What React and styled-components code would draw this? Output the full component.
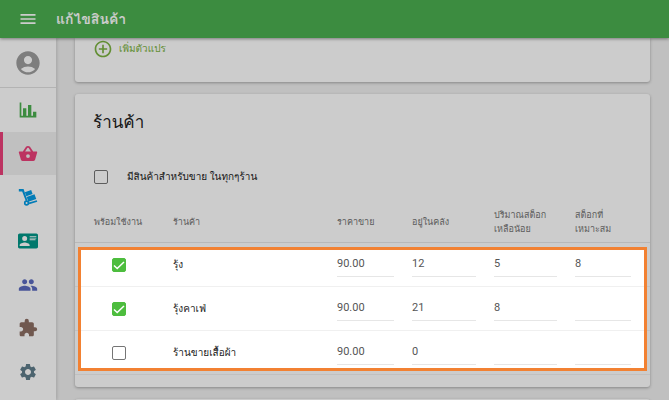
import React, { useState } from "react";
import styled, { createGlobalStyle } from "styled-components";
import {
  MdMenu,
  MdAccountCircle,
  MdPeople,
  MdExtension,
  MdSettings,
  MdAddCircleOutline,
} from "react-icons/md";

const GlobalStyle = createGlobalStyle`
  *, *::before, *::after { box-sizing: border-box; }
  html, body, #root { height: 100%; }
  body {
    margin: 0;
    overflow: hidden;
    background: #f0f0f0;
    color: #212121;
    font-family: Roboto, Tahoma, Loma, "Noto Sans Thai Looped", Waree, sans-serif;
    font-size: 10px;
    line-height: 16px;
  }
  button, input { font: inherit; color: inherit; }
`;

const Page = styled.div`
  height: 100%;
  display: flex;
  flex-direction: column;
  overflow: hidden;
`;

const TopBar = styled.header`
  position: relative;
  z-index: 2;
  flex: none;
  display: flex;
  align-items: center;
  gap: 18px;
  height: 38px;
  padding: 0 18px;
  background: #4caf50;
  color: #fff;
  box-shadow: 0 1px 3px rgba(0, 0, 0, 0.4);
`;

const MenuButton = styled.button`
  display: flex;
  padding: 0;
  border: 0;
  background: none;
  cursor: pointer;
  svg { width: 20px; height: 20px; }
`;

const PageTitle = styled.h1`
  margin: 0;
  font-size: 14px;
  line-height: 24px;
  font-weight: 700;
`;

const Body = styled.div`
  flex: 1;
  min-height: 0;
  display: flex;
`;

const Sidebar = styled.aside`
  flex: none;
  width: 56px;
  background: #fff;
  box-shadow: 1px 0 3px rgba(0, 0, 0, 0.15);
`;

const Account = styled.a`
  display: flex;
  align-items: center;
  justify-content: center;
  height: 50px;
  border-bottom: 1px solid #e0e0e0;
  color: #9e9e9e;
  svg { width: 28px; height: 28px; }
`;

const Nav = styled.nav`
  display: grid;
  grid-auto-rows: 1fr;
  height: 306px;
`;

const NavItem = styled.a`
  display: flex;
  align-items: center;
  justify-content: center;
  color: ${(p) => p.$color};
  background: ${(p) => (p.$active ? "#f0f0f0" : "transparent")};
  box-shadow: ${(p) => (p.$active ? "inset 3px 0 0 #ec407a" : "none")};
  svg { width: 20px; height: 20px; }
`;

const Main = styled.main`
  flex: 1;
  min-width: 0;
  display: flex;
  flex-direction: column;
  gap: 12px;
  padding: 0 19px;
`;

const Card = styled.section`
  flex: none;
  background: #fff;
  border-radius: ${(p) => (p.$continued ? "0 0 3px 3px" : "3px")};
  padding: ${(p) => (p.$continued ? "2px 18px 24px" : "16px 0 12px")};
  box-shadow: 0 1px 3px rgba(0, 0, 0, 0.3);
`;

const AddButton = styled.button`
  display: flex;
  align-items: center;
  gap: 6px;
  padding: 0;
  height: 18px;
  border: 0;
  background: none;
  color: #7cb342;
  cursor: pointer;
  svg { width: 20px; height: 20px; }
`;

const CardTitle = styled.h2`
  margin: 0;
  padding: 0 18px;
  font-size: 17px;
  line-height: 24px;
  font-weight: 400;
`;

const AllStores = styled.label`
  display: flex;
  align-items: center;
  gap: 19px;
  margin-top: 31px;
  padding: 0 19px;
  height: 24px;
`;

const CheckBox = styled.span`
  display: inline-grid;
  width: 14px;
  height: 14px;
  vertical-align: middle;
  input, svg { grid-area: 1 / 1; }
  input {
    appearance: none;
    width: 14px;
    height: 14px;
    margin: 0;
    border: 1px solid #757575;
    border-radius: 2px;
    background: #fff;
  }
  input:checked { border-color: #4dbd3e; background: #4dbd3e; }
  svg { width: 14px; height: 14px; pointer-events: none; visibility: hidden; }
  input:checked + svg { visibility: visible; }
`;

const TableArea = styled.div`
  position: relative;
  margin-top: 10px;
`;

const StoreTable = styled.table`
  width: 100%;
  table-layout: fixed;
  border-collapse: separate;
  border-spacing: 0;
`;

const HeadCell = styled.th`
  width: ${(p) => p.$width || "auto"};
  height: 44px;
  padding: 2px 9px 0;
  border-bottom: 1px solid #e6e6e6;
  color: #757575;
  font-size: 9px;
  line-height: 14px;
  font-weight: 400;
  text-align: left;
  &:first-child { padding-left: 19px; padding-right: 0; }
  &:last-child { padding-right: 19px; }
`;

const Cell = styled.td`
  height: 44px;
  padding: 0 9px;
  border-bottom: 1px solid #f0f0f0;
  &:first-child { padding: 0 0 0 37px; }
  &:last-child { padding-right: 19px; }
`;

const Field = styled.input`
  display: block;
  width: 100%;
  height: 24px;
  padding: 0 0 2px;
  border: 0;
  border-bottom: 1px solid #e6e6e6;
  border-radius: 0;
  outline: 0;
  background: transparent;
  color: #555;
  font-size: 11px;
`;

const Spotlight = styled.div`
  position: absolute;
  z-index: 3;
  inset: 48px 3px 4px;
  border: 3px solid #f28132;
  box-shadow: 0 0 0 2000px rgba(0, 0, 0, 0.2);
  pointer-events: none;
`;

const ChartIcon = () => (
  <svg viewBox="0 0 24 24" fill="currentColor" aria-hidden="true">
    <path d="M22 21H2V3h2v16h2v-9h4v9h2V6h4v13h2v-5h4z" />
  </svg>
);

const BasketIcon = () => (
  <svg viewBox="0 0 24 24" fill="currentColor" aria-hidden="true">
    <path
      fillRule="evenodd"
      d="M5.800 9l3.800-5.600C10.100 2.700 11 2.300 12 2.300s1.900.4 2.400 1.100L18.200 9H22c.7 0 1.200.6 1 1.300l-2.500 8.600c-.2.8-1 1.400-1.900 1.400H5.400c-.9 0-1.700-.6-1.900-1.400L1 10.300C.8 9.600 1.300 9 2 9zm2.700 0h7l-2.700-4.200c-.4-.6-1.200-.6-1.600 0zM12 12.200a2.300 2.300 0 1 0 0 4.600 2.300 2.300 0 0 0 0-4.600z"
    />
  </svg>
);

const TrolleyIcon = () => (
  <svg viewBox="0 0 24 24" fill="currentColor" aria-hidden="true">
    <path d="M1 2.500h5.700l4.700 13.600-2 .8L5 5.300H1z" />
    <path d="M8.200 6.200l7.600-2.700 1.700 4.900-7.500 2.700z" />
    <path d="M10.400 11.900l9.400-3.300 2.100 5.700-9.400 3.300z" />
    <path d="M13.100 18.600l9.400-2.700.6 1.900-9.600 2.800z" />
    <path
      fillRule="evenodd"
      d="M10.300 16a3.200 3.200 0 1 1 0 6.400 3.200 3.200 0 0 1 0-6.400zm0 2a1.200 1.200 0 1 0 0 2.400 1.200 1.200 0 0 0 0-2.400z"
    />
  </svg>
);

const ContactIcon = () => (
  <svg viewBox="0 0 24 24" fill="currentColor" aria-hidden="true">
    <path
      fillRule="evenodd"
      d="M2 3h20c1.100 0 2 .9 2 2v14c0 1.100-.9 2-2 2H2c-1.100 0-2-.9-2-2V5c0-1.100.9-2 2-2zm12 3v1h8V6zm0 2v1h8V8zm0 2v1h7v-1zM8 13.900c-2 0-6 1.100-6 3.100v1h12v-1c0-2-4-3.100-6-3.100zM8 6a3 3 0 1 0 0 6 3 3 0 0 0 0-6z"
    />
  </svg>
);

const NAV = [
  { label: "รายงาน", color: "#4caf50", Icon: ChartIcon },
  { label: "สินค้า", color: "#ec407a", Icon: BasketIcon, active: true },
  { label: "คลังสินค้า", color: "#039be5", Icon: TrolleyIcon },
  { label: "พนักงาน", color: "#009688", Icon: ContactIcon },
  { label: "ลูกค้า", color: "#5c6bc0", Icon: MdPeople },
  { label: "แอป", color: "#8d6e63", Icon: MdExtension },
  { label: "การตั้งค่า", color: "#607d8b", Icon: MdSettings },
];

const COLUMNS = [
  { label: "พร้อมใช้งาน", width: "89px" },
  { label: "ร้านค้า" },
  { label: "ราคาขาย", width: "75px" },
  { label: "อยู่ในคลัง", width: "82px" },
  { label: "ปริมาณสต็อกเหลือน้อย", lines: ["ปริมาณสต็อก", "เหลือน้อย"], width: "81px" },
  { label: "สต็อกที่เหมาะสม", lines: ["สต็อกที่", "เหมาะสม"], width: "84px" },
];

const STORES = [
  { name: "รุ้ง", available: true, values: ["90.00", "12", "5", "8"] },
  { name: "รุ้งคาเฟ่", available: true, values: ["90.00", "21", "8", ""] },
  { name: "ร้านขายเสื้อผ้า", available: false, values: ["90.00", "0", "", ""] },
];

function Check({ initial = false, ...rest }) {
  const [on, setOn] = useState(initial);
  return (
    <CheckBox>
      <input type="checkbox" checked={on} onChange={(e) => setOn(e.target.checked)} {...rest} />
      <svg viewBox="0 0 14 14" fill="none" stroke="#fff" strokeWidth="1.5" aria-hidden="true">
        <path d="M2 7.500l3.200 3L12 4" />
      </svg>
    </CheckBox>
  );
}

export default function App() {
  return (
    <Page>
      <GlobalStyle />
      <TopBar>
        <MenuButton aria-label="เมนู">
          <MdMenu />
        </MenuButton>
        <PageTitle>แก้ไขสินค้า</PageTitle>
      </TopBar>
      <Body>
        <Sidebar>
          <Account href="#account" aria-label="บัญชี">
            <MdAccountCircle />
          </Account>
          <Nav>
            {NAV.map(({ label, color, Icon, active }) => (
              <NavItem key={label} href="#" aria-label={label} $color={color} $active={active}>
                <Icon />
              </NavItem>
            ))}
          </Nav>
        </Sidebar>
        <Main>
          <Card $continued>
            <AddButton>
              <MdAddCircleOutline />
              เพิ่มตัวแปร
            </AddButton>
          </Card>
          <Card>
            <CardTitle>ร้านค้า</CardTitle>
            <AllStores>
              <Check />
              มีสินค้าสำหรับขาย ในทุกๆร้าน
            </AllStores>
            <TableArea>
              <StoreTable>
                <thead>
                  <tr>
                    {COLUMNS.map((c) => (
                      <HeadCell key={c.label} $width={c.width} scope="col">
                        {c.lines ? (
                          <>
                            {c.lines[0]}
                            <br />
                            {c.lines[1]}
                          </>
                        ) : (
                          c.label
                        )}
                      </HeadCell>
                    ))}
                  </tr>
                </thead>
                <tbody>
                  {STORES.map((s) => (
                    <tr key={s.name}>
                      <Cell>
                        <Check initial={s.available} aria-label={`พร้อมใช้งาน ${s.name}`} />
                      </Cell>
                      <Cell>{s.name}</Cell>
                      {s.values.map((v, i) => (
                        <Cell key={COLUMNS[i + 2].label}>
                          <Field defaultValue={v} aria-label={`${COLUMNS[i + 2].label} ${s.name}`} />
                        </Cell>
                      ))}
                    </tr>
                  ))}
                </tbody>
              </StoreTable>
              <Spotlight />
            </TableArea>
          </Card>
          <Card />
        </Main>
      </Body>
    </Page>
  );
}
